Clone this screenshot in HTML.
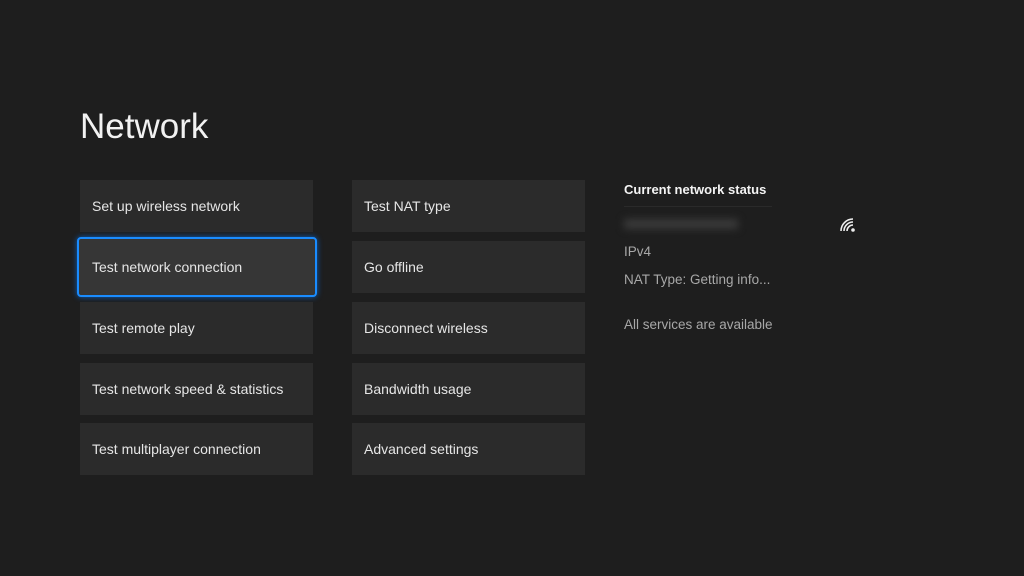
<!DOCTYPE html>
<html><head><meta charset="utf-8"><style>
body{margin:0;width:1024px;height:576px;background:#1e1e1e;font-family:"Liberation Sans",sans-serif;position:relative;overflow:hidden;color:#e8e8e8}
h1{position:absolute;left:80px;top:107px;margin:0;font-weight:normal;font-size:35px;color:#f2f2f2}
.t{position:absolute;width:233px;height:52px;background:#2b2b2b;font-size:14px;line-height:53px;box-sizing:border-box;padding-left:12px;color:#e6e6e6}
.f{left:77px!important;top:237px!important;width:240px;height:60px;line-height:57px;background:#363636;border:2px solid #1a8cff;border-radius:4px;padding-left:13px;box-shadow:0 0 6px #0a5fc0}
.s{position:absolute;left:624px;font-size:13.5px;color:#a8a8a8}
</style></head><body>
<h1>Network</h1>
<div class="t" style="left:80px;top:180px">Set up wireless network</div>
<div class="t f">Test network connection</div>
<div class="t" style="left:80px;top:302px">Test remote play</div>
<div class="t" style="left:80px;top:363px">Test network speed &amp; statistics</div>
<div class="t" style="left:80px;top:423px">Test multiplayer connection</div>
<div class="t" style="left:352px;top:180px">Test NAT type</div>
<div class="t" style="left:352px;top:241px">Go offline</div>
<div class="t" style="left:352px;top:302px">Disconnect wireless</div>
<div class="t" style="left:352px;top:363px">Bandwidth usage</div>
<div class="t" style="left:352px;top:423px">Advanced settings</div>
<div class="s" style="top:182px;color:#f4f4f4;font-weight:bold;font-size:13px">Current network status</div>
<div style="position:absolute;left:624px;top:206px;width:148px;height:1px;background:#2a2a2a"></div>
<div style="position:absolute;left:624px;top:219px;width:114px;height:10px;background:#3a3a3a;filter:blur(4px)"></div>
<svg style="position:absolute;left:838px;top:215px" width="20" height="18" viewBox="0 0 20 18" fill="none" stroke="#eee" stroke-width="1.6">
<path d="M3 16 A12 12 0 0 1 15 4"/><path d="M6 16 A9 9 0 0 1 15 7"/><path d="M9 16 A6 6 0 0 1 15 10"/><circle cx="15" cy="15" r="1.8" fill="#eee" stroke="none"/></svg>
<div class="s" style="top:244px">IPv4</div>
<div class="s" style="top:272px">NAT Type: Getting info...</div>
<div class="s" style="top:317px">All services are available</div>
</body></html>
